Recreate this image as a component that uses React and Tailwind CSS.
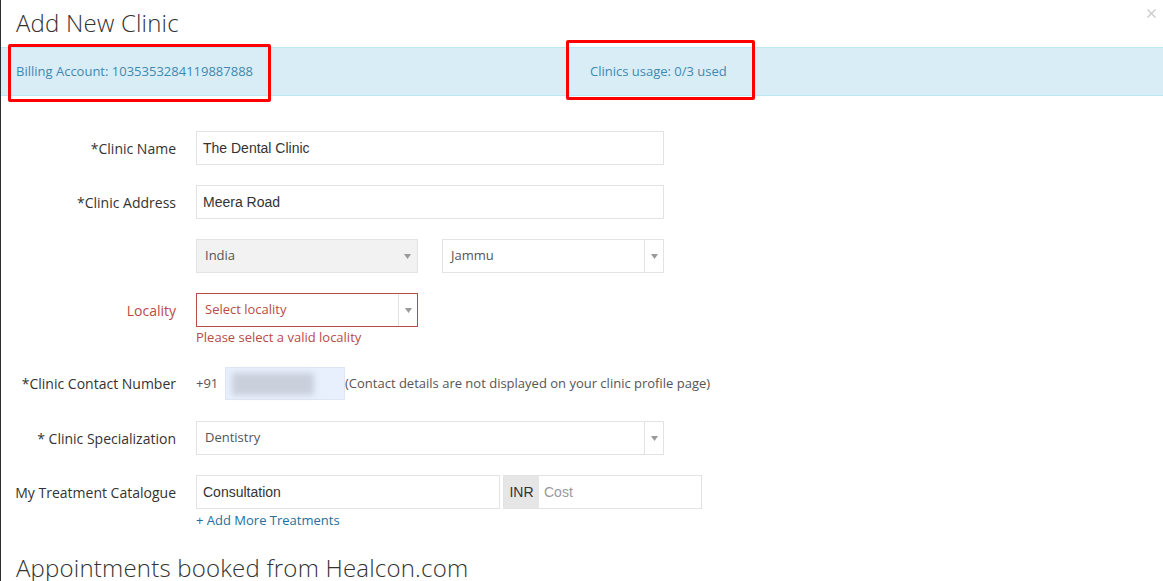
const Arrow = () => (
  <svg width="7" height="5" viewBox="0 0 7 5" className="block">
    <path d="M0 0 H7 L3.5 5 Z" fill="#9a9a9a" />
  </svg>
);

function Row({ label, labelClass = 'text-[#333]', children, className = '' }) {
  return (
    <div className={'flex items-center ' + className}>
      <div className={'w-[175px] shrink-0 text-right text-[14px] ' + labelClass}>{label}</div>
      <div className="ml-[20px] flex items-center">{children}</div>
    </div>
  );
}

function TextBox({ value, width }) {
  return (
    <div className={'flex h-[34px] items-center border border-[#e3e3e3] bg-white px-[6px] font-["Liberation_Sans",Arial,sans-serif] text-[14px] text-[#333] ' + width}>
      {value}
    </div>
  );
}

function Select({ value, width, gray = false, error = false }) {
  return (
    <div
      className={
        'flex h-[34px] items-stretch border text-[13px] ' +
        width +
        (gray ? ' border-[#e3e3e3] bg-[#f2f2f2] text-[#555]' : '') +
        (error ? ' border-[#b94a48] bg-white text-[#b94a48]' : '') +
        (!gray && !error ? ' border-[#e3e3e3] bg-white text-[#555]' : '')
      }
    >
      <div className="flex flex-1 items-center pl-[8px]">{value}</div>
      <div className={'flex w-[19px] items-center justify-center ' + (gray ? '' : 'border-l border-[#e3e3e3]')}>
        <Arrow />
      </div>
    </div>
  );
}

export default function App() {
  return (
    <div className="relative h-[581px] w-[1163px] overflow-hidden border-l border-[#2e2e2e] bg-white font-['Open_Sans',sans-serif] text-[#333]">
      {/* header */}
      <div className="h-[47px] pl-[15px] pt-[6px]">
        <h1 className="text-[24px] font-light leading-[33px] tracking-[0.2px] text-[#333]">Add New Clinic</h1>
      </div>
      <svg width="9" height="9" viewBox="0 0 9 9" className="absolute left-[1146px] top-[9px]">
        <path d="M0.5 0.5 L8.5 8.5 M8.5 0.5 L0.5 8.5" stroke="#c8c8c8" strokeWidth="1.2" />
      </svg>

      {/* billing info */}
      <div className="flex h-[49px] items-center border-y border-[#bce8f1] bg-[#d9edf7] text-[13px] text-[#3f89b0]">
        <div className="w-[589px] pl-[15px]">Billing Account: 1035353284119887888</div>
        <div>Clinics usage: 0/3 used</div>
      </div>
      <div className="absolute left-[7px] top-[44px] h-[58px] w-[263px] rounded-[2px] border-[3px] border-[#ff0000]" />
      <div className="absolute left-[565px] top-[40px] h-[60px] w-[189px] rounded-[2px] border-[3px] border-[#ff0000]" />

      {/* form */}
      <div className="mt-[35px]">
        <Row label="*Clinic Name">
          <TextBox value="The Dental Clinic" width="w-[468px]" />
        </Row>
        <Row label="*Clinic Address" className="mt-[20px]">
          <TextBox value="Meera Road" width="w-[468px]" />
        </Row>
        <Row label="" className="mt-[20px]">
          <Select value="India" width="w-[222px]" gray />
          <div className="ml-[24px]">
            <Select value="Jammu" width="w-[222px]" />
          </div>
        </Row>
        <Row label="Locality" labelClass="text-[#b94a48]" className="mt-[20px]">
          <Select value="Select locality" width="w-[222px]" error />
        </Row>
        <div className="ml-[195px] mt-[1px] h-[18px] text-[13px] leading-[18px] text-[#b94a48]">
          Please select a valid locality
        </div>

        <Row label="*Clinic Contact Number" className="mt-[21px]">
          <span className="w-[29px] text-[13px] text-[#555]">+91</span>
          <div className="flex h-[33px] w-[120px] items-center border border-[#dfe6f3] bg-[#e8f0fe] pl-[6px]">
            <div className="h-[22px] w-[82px] bg-[#c9cfdb] blur-[3px]" />
          </div>
          <span className="text-[13px] text-[#555]">
            (Contact details are not displayed on your clinic profile page)
          </span>
        </Row>

        <Row label="* Clinic Specialization" className="mt-[21px]">
          <Select value="Dentistry" width="w-[468px]" />
        </Row>

        <Row label="My Treatment Catalogue" className="mt-[20px]">
          <TextBox value="Consultation" width="w-[304px]" />
          <div className="ml-[3px] flex h-[34px] items-stretch border border-[#e3e3e3] font-['Liberation_Sans',Arial,sans-serif] text-[14px]">
            <div className="flex w-[35px] items-center justify-center bg-[#e6e6e6] text-[#333]">INR</div>
            <div className="flex w-[162px] items-center bg-white pl-[5px] text-[#999]">Cost</div>
          </div>
        </Row>
        <div className="ml-[195px] mt-[2px] text-[13px] leading-[18px] text-[#23709e]">+ Add More Treatments</div>

        <h2 className="ml-[15px] mt-[22px] text-[24px] font-light leading-[33px] tracking-[0.2px] text-[#333]">
          Appointments booked from Healcon.com
        </h2>
      </div>
    </div>
  );
}
